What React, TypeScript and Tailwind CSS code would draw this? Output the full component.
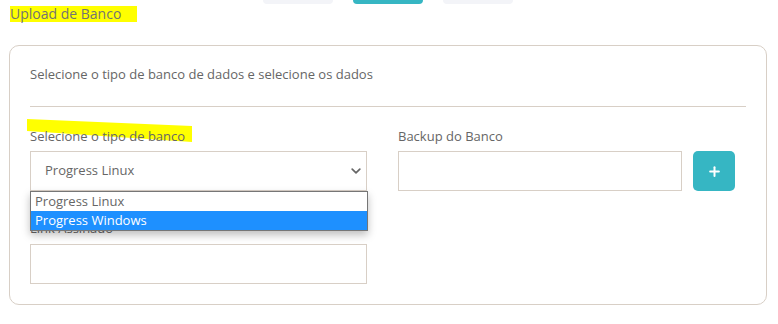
import { Plus } from "lucide-react";

const font = { fontFamily: '"Open Sans", "Liberation Sans", sans-serif' };

function Chevron() {
  return (
    <svg width="10" height="6" viewBox="0 0 10 6" fill="none">
      <path d="M1.2 1.2l3.8 3.6 3.8-3.6" stroke="#666" strokeWidth="1.7" strokeLinecap="round" strokeLinejoin="round" />
    </svg>
  );
}

export default function App() {
  return (
    <div className="w-[778px] h-[324px] bg-white overflow-hidden relative" style={font}>
      {/* abas cortadas no topo */}
      <div className="flex h-[4px] gap-[20px] pl-[263px]">
        <div className="w-[70px] h-[4px] rounded-b-[5px] bg-[#f3f4f8]" />
        <div className="w-[70px] h-[4px] rounded-b-[5px] bg-[#36b6c3]" />
        <div className="w-[70px] h-[4px] rounded-b-[5px] bg-[#f3f4f8]" />
      </div>

      <div className="mt-[2px] ml-[10px] w-[127px] h-[16px] bg-[#ffff00] text-[14px] leading-[16px] text-[#737373]">
        Upload de Banco
      </div>

      <div className="mt-[23px] ml-[9px] w-[758px] h-[260px] border border-[#d8cfc6] rounded-[10px] px-[20px]">
        <div className="pt-[18px] h-[60px] text-[13px] leading-[20px] text-[#666]">
          Selecione o tipo de banco de dados e selecione os dados
        </div>
        <div className="w-[716px] border-t border-[#d8cfc6]" />

        <div className="flex gap-[31px] mt-[19px]">
          <div className="w-[337px] flex flex-col">
            <div className="relative h-[20px] text-[13px] leading-[20px] text-[#666]">
              <svg className="absolute left-[-3px] top-[-7px]" width="166" height="24" viewBox="0 0 166 24">
                <polygon points="0,0 165,7 165,23 0,12" fill="#ffff00" />
              </svg>
              <span className="relative">Selecione o tipo de banco</span>
            </div>
            <div className="relative mt-[5px]">
              <div className="h-[40px] border border-[#d8cfc6] flex items-center justify-between pl-[14px] pr-[5px] text-[13px] text-[#666]">
                <span>Progress Linux</span>
                <Chevron />
              </div>
              <div className="absolute left-0 top-[40px] w-[338px] border border-[#767676] bg-white shadow-[0_4px_8px_rgba(0,0,0,0.25)] text-[13px] leading-[19px] z-10">
                <div className="pl-[4px] h-[19px] text-[#666]">Progress Linux</div>
                <div className="pl-[4px] h-[19px] bg-[#1e90ff] text-white">Progress Windows</div>
              </div>
            </div>
            <div className="mt-[27px] h-[20px] text-[13px] leading-[20px] text-[#666]">Link Assinado</div>
            <div className="mt-[6px] h-[40px] border border-[#d8cfc6]" />
          </div>

          <div className="w-[337px] flex flex-col">
            <div className="h-[20px] text-[13px] leading-[20px] text-[#666]">Backup do Banco</div>
            <div className="mt-[5px] flex gap-[11px]">
              <div className="w-[286px] h-[40px] border border-[#d8cfc6]" />
              <button className="w-[42px] h-[40px] rounded-[5px] bg-[#36b6c3] flex items-center justify-center text-white">
                <Plus size={15} strokeWidth={3.2} />
              </button>
            </div>
          </div>
        </div>
      </div>
    </div>
  );
}
